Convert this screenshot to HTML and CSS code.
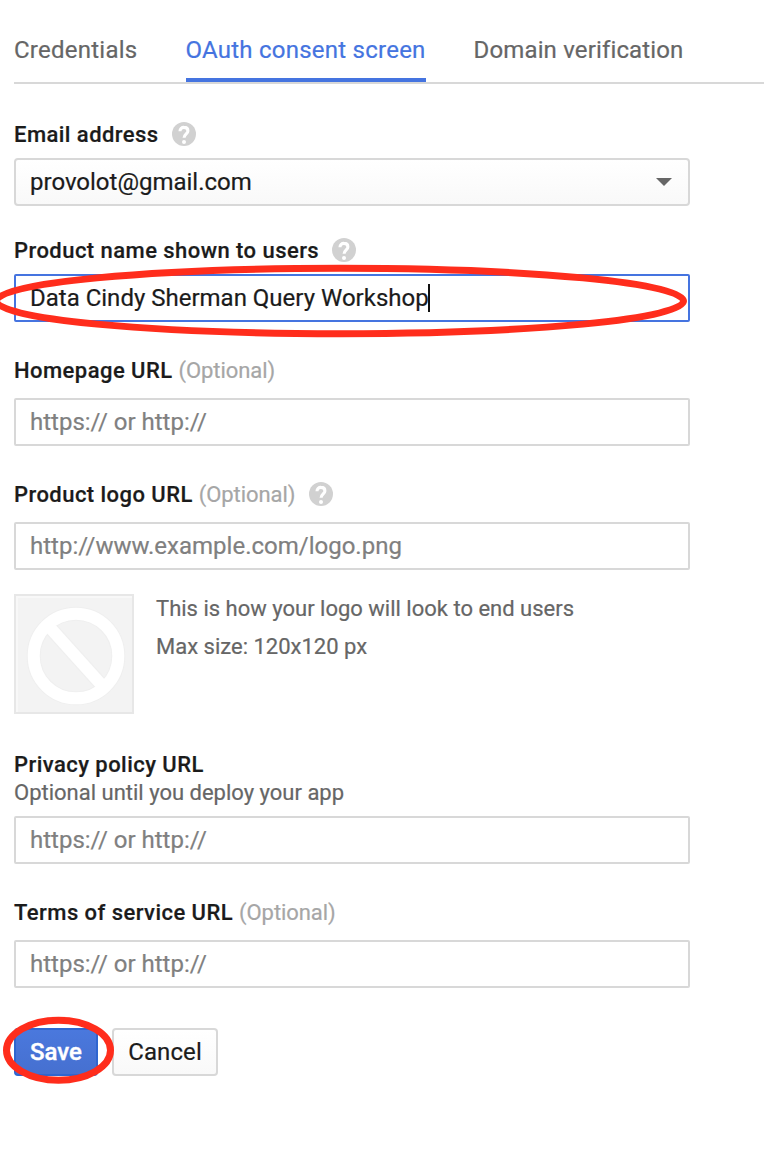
FILE: index.html
```html
<!DOCTYPE html>
<html lang="en">
<head>
<meta charset="utf-8">
<title>OAuth consent screen</title>
<link rel="stylesheet" href="styles.css">
</head>
<body>
<svg class="defs" width="0" height="0" aria-hidden="true">
  <symbol id="help" viewBox="0 0 24 24">
    <circle cx="12" cy="12" r="12" fill="#d1d1d1"/>
    <path d="M8 9.2A3.8 3.8 0 0 1 12 5.4c2.3 0 3.9 1.4 3.9 3.5 0 2.9-3.8 3-3.8 6.9" fill="none" stroke="#fff" stroke-width="3.1"/>
    <circle cx="12" cy="19.9" r="2" fill="#fff"/>
  </symbol>
</svg>
<main class="page">
  <nav class="tabs">
    <a class="tab tab-credentials">Credentials</a>
    <a class="tab tab-active">OAuth consent screen</a>
    <a class="tab tab-domain">Domain verification</a>
  </nav>
  <form class="form">
    <section class="group email">
      <div class="label"><b>Email address</b><svg class="help"><use href="#help"/></svg></div>
      <div class="field select"><span class="mail">provolot@gmail.com</span><svg class="arrow" viewBox="0 0 16 8"><path d="M0 0h16L8 8z" fill="#666"/></svg></div>
    </section>
    <section class="group product">
      <div class="label"><b>Product name shown to users</b><svg class="help"><use href="#help"/></svg></div>
      <div class="field focused"><span class="value">Data Cindy Sherman Query Workshop</span><i class="caret"></i></div>
      <svg class="mark mark-product" viewBox="0 0 700 80"><ellipse cx="340" cy="40" rx="343.5" ry="32.7"/></svg>
    </section>
    <section class="group homepage">
      <div class="label"><b>Homepage URL</b><span class="optional">(Optional)</span></div>
      <div class="field hint">https:// or http://</div>
    </section>
    <section class="group logo-url">
      <div class="label"><b>Product logo URL</b><span class="optional">(Optional)</span><svg class="help"><use href="#help"/></svg></div>
      <div class="field hint hint-logo">http://www.example.com/logo.png</div>
    </section>
    <section class="preview">
      <svg class="placeholder" viewBox="0 0 120 120">
        <path d="M0 0h120v120H0z" fill="#e7e7e7"/>
        <path d="M2 2h116v116H2z" fill="#f8f8f8"/>
        <path d="M4 4h114v114H4z" fill="#f3f3f3"/>
        <g fill="none" stroke="#efefef" stroke-width="14"><circle cx="62" cy="62" r="42.3"/><path d="M34.500 32l54 60"/></g>
        <g fill="none" stroke="#fff" stroke-width="12"><circle cx="62" cy="62" r="42.3"/><path d="M34.500 32l54 60"/></g>
      </svg>
      <div class="notes"><p class="note-look">This is how your logo will look to end users</p><p class="note-size">Max size: 120x120 px</p></div>
    </section>
    <section class="group privacy">
      <div class="label"><b>Privacy policy URL</b></div>
      <p class="sub">Optional until you deploy your app</p>
      <div class="field hint">https:// or http://</div>
    </section>
    <section class="group terms">
      <div class="label"><b>Terms of service URL</b><span class="optional">(Optional)</span></div>
      <div class="field hint">https:// or http://</div>
    </section>
    <div class="actions">
      <button type="button" class="btn save">Save</button>
      <button type="button" class="btn cancel">Cancel</button>
      <svg class="mark mark-save" viewBox="0 0 120 70"><ellipse cx="58.5" cy="35.3" rx="52" ry="30"/></svg>
    </div>
  </form>
</main>
</body>
</html>
```
FILE: styles.css
```css
* { box-sizing: border-box; }
body { margin: 0; background: #fff; color: #1b1b1b; font-family: Roboto, "Liberation Sans", sans-serif; font-size: 24px; overflow: hidden; -webkit-text-stroke: .2px; }
p { margin: 0; }
.defs { position: absolute; }
.page { padding-left: 14px; height: 1164px; }
.tabs { display: flex; height: 84px; border-bottom: 2px solid #d8d8d8; }
.tab { height: 82px; padding-top: 34px; line-height: 32px; color: #666; white-space: nowrap; letter-spacing: .24px; }
.tab-credentials { width: 124px; margin-right: 48px; }
.tab-active { width: 240px; margin-right: 47.5px; color: #4574e0; border-bottom: 4px solid #4574e0; text-indent: -.5px; }
.tab-domain { letter-spacing: .15px; }
.form { width: 676px; padding-top: 34px; }
.group { position: relative; }
.label { display: flex; align-items: center; height: 32px; padding-top: 1px; font-size: 22px; line-height: 32px; white-space: nowrap; letter-spacing: .45px; }
.label b { font-weight: 500; }
.optional { margin-left: 6px; color: #a6a6a6; letter-spacing: -.07px; }
.help { width: 24px; height: 24px; margin: -1px 0 0 13px; flex: none; }
.optional + .help { margin-left: 14px; }
.field { display: flex; align-items: center; height: 48px; padding: 0 14px; border: 2px solid #d8d8d8; border-radius: 2px; line-height: 44px; white-space: nowrap; }
.select { justify-content: space-between; background: linear-gradient(#fff, #f9f9f9); border-radius: 4px; }
.arrow { width: 16px; height: 8px; margin-right: 2px; }
.focused { border-color: #4574e0; }
.caret { width: 2px; height: 28px; margin-left: -1px; background: #111; }
.hint { color: #808080; }
.email .label, .product .label { margin-bottom: 8px; }
.product { margin-top: 28px; }
.homepage { margin-top: 32px; }
.homepage .label, .logo-url .label, .terms .label { margin-bottom: 12px; }
.logo-url, .terms { margin-top: 32px; }
.preview { display: flex; gap: 22px; margin-top: 24px; }
.placeholder { width: 120px; height: 120px; }
.notes { margin-top: -4px; font-size: 22px; line-height: 38px; color: #666; }
.privacy { margin-top: 34px; }
.sub { margin-top: -3px; margin-bottom: 7px; color: #666; font-size: 22px; line-height: 32px; }
.actions { position: relative; display: flex; gap: 14px; margin-top: 40px; }
.btn { height: 48px; padding: 0; border: 2px solid #d8d8d8; border-radius: 4px; background: linear-gradient(#fff, #f9f9f9); color: #1b1b1b; font: 24px/44px Roboto, "Liberation Sans", sans-serif; }
.save { width: 84px; border-color: #2f66d0; background: linear-gradient(#4a78dd, #4670d0); color: #fff; font-weight: 500; -webkit-text-stroke: .4px; }
.cancel { width: 106px; letter-spacing: .1px; }
.mark { position: absolute; overflow: visible; fill: none; stroke: #ff2d1c; stroke-width: 7; pointer-events: none; }
.mark-product { left: -14px; top: 27px; width: 700px; height: 80px; }
.mark-save { left: -14px; top: -13px; width: 120px; height: 70px; }
```
